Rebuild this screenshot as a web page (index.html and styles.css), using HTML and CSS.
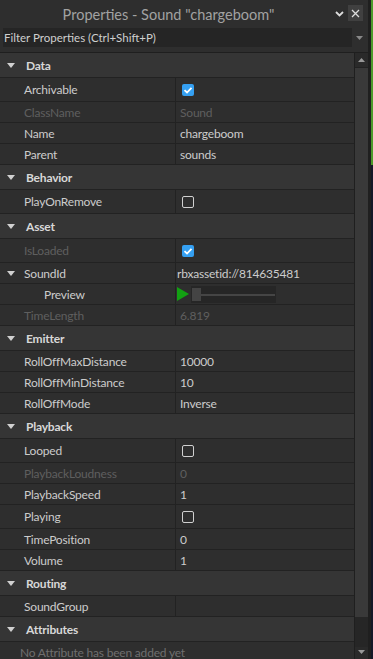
FILE: index.html
```html
<!DOCTYPE html>
<html lang="en">
<head>
    <meta charset="UTF-8">
    <title>Properties - Sound "chargeboom"</title>
    <link rel="stylesheet" href="styles.css">
</head>
<body>
    <div class="window">
        <div class="titlebar">
            <span class="title">Properties - Sound "chargeboom"</span>
            <span class="chev">
                <svg width="9" height="6" viewBox="0 0 9 6"><path d="M1 1 L4.5 4.5 L8 1" fill="none" stroke="#ddd" stroke-width="1.8"/></svg>
            </span>
            <span class="close">
                <svg width="9" height="9" viewBox="0 0 9 9"><path d="M1 1 L8 8 M8 1 L1 8" stroke="#ddd" stroke-width="1.3"/></svg>
            </span>
        </div>
        <div class="filter">
            <div class="filter-input">Filter Properties (Ctrl+Shift+P)</div>
            <span class="filter-arrow">
                <svg width="7" height="4" viewBox="0 0 7 4"><path d="M0 0 H7 L3.5 4 Z" fill="#888"/></svg>
            </span>
        </div>
        <div class="pane">
            <div class="list">
                <div class="section"><span class="tri"></span>Data</div>
                <div class="row tall"><span class="name">Archivable</span><span class="value"><span class="check on"></span></span></div>
                <div class="row disabled"><span class="name">ClassName</span><span class="value">Sound</span></div>
                <div class="row"><span class="name">Name</span><span class="value">chargeboom</span></div>
                <div class="row"><span class="name">Parent</span><span class="value">sounds</span></div>

                <div class="section"><span class="tri"></span>Behavior</div>
                <div class="row tall"><span class="name">PlayOnRemove</span><span class="value"><span class="check"></span></span></div>

                <div class="section"><span class="tri"></span>Asset</div>
                <div class="row tall disabled"><span class="name">IsLoaded</span><span class="value"><span class="check on"></span></span></div>
                <div class="row"><span class="name"><span class="tri small"></span>SoundId</span><span class="value flush">rbxassetid://814635481</span></div>
                <div class="row"><span class="name sub">Preview</span><span class="value flush">
                    <span class="play"></span>
                    <span class="slider"><span class="knob"></span></span>
                </span></div>
                <div class="row disabled"><span class="name">TimeLength</span><span class="value">6.819</span></div>

                <div class="section"><span class="tri"></span>Emitter</div>
                <div class="row"><span class="name">RollOffMaxDistance</span><span class="value">10000</span></div>
                <div class="row"><span class="name">RollOffMinDistance</span><span class="value">10</span></div>
                <div class="row"><span class="name">RollOffMode</span><span class="value">Inverse</span></div>

                <div class="section"><span class="tri"></span>Playback</div>
                <div class="row tall"><span class="name">Looped</span><span class="value"><span class="check"></span></span></div>
                <div class="row disabled"><span class="name">PlaybackLoudness</span><span class="value">0</span></div>
                <div class="row"><span class="name">PlaybackSpeed</span><span class="value">1</span></div>
                <div class="row tall"><span class="name">Playing</span><span class="value"><span class="check"></span></span></div>
                <div class="row"><span class="name">TimePosition</span><span class="value">0</span></div>
                <div class="row"><span class="name">Volume</span><span class="value">1</span></div>

                <div class="section"><span class="tri"></span>Routing</div>
                <div class="row"><span class="name">SoundGroup</span><span class="value"></span></div>

                <div class="section"><span class="tri"></span>Attributes</div>
                <div class="empty">No Attribute has been added yet</div>
            </div>
            <div class="scrollbar">
                <div class="scroll-btn">
                    <svg width="7" height="4" viewBox="0 0 7 4"><path d="M0 4 H7 L3.5 0 Z" fill="#999"/></svg>
                </div>
                <div class="thumb"></div>
                <div class="track"></div>
                <div class="scroll-btn bottom">
                    <svg width="7" height="4" viewBox="0 0 7 4"><path d="M0 0 H7 L3.5 4 Z" fill="#999"/></svg>
                </div>
            </div>
        </div>
    </div>
    <div class="edge"></div>
</body>
</html>
```

FILE: styles.css
```css
body {
    margin: 0;
    width: 373px;
    height: 659px;
    overflow: hidden;
    display: flex;
    background-color: #2e2e2e;
    font-family: 'Lato', 'Noto Sans', sans-serif;
    font-size: 12px;
    letter-spacing: -0.2px;
    color: #cccccc;
}
.window {
    flex: 1;
    display: flex;
    flex-direction: column;
    border-right: 3px solid #1f1f1f;
    min-width: 0;
}
.edge {
    width: 2px;
    background: linear-gradient(#4c9a2a 0, #4c9a2a 165px, #141828 165px);
}
.titlebar {
    height: 28px;
    display: flex;
    align-items: center;
    background-color: #2e2e2e;
}
.title {
    flex: 1;
    text-align: center;
    font-size: 14.5px;
    letter-spacing: 0;
    color: #a2a2a2;
    padding-left: 2px;
}
.chev {
    width: 9px;
    margin-right: 4px;
    display: flex;
}
.close {
    width: 15px;
    height: 16px;
    margin-right: 5px;
    margin-bottom: 2px;
    background-color: #404040;
    display: flex;
    align-items: center;
    justify-content: center;
}
.filter {
    height: 19px;
    display: flex;
    align-items: center;
    padding-left: 3px;
}
.filter-input {
    width: 349px;
    height: 19px;
    line-height: 19px;
    background-color: #252525;
    font-size: 11.5px;
    letter-spacing: 0;
    color: #cfcfcf;
    padding-left: 1px;
    box-sizing: border-box;
}
.filter-arrow {
    margin-left: 4px;
    display: flex;
}
.pane {
    margin-top: 5px;
    flex: 1;
    display: flex;
    border-top: 1px solid #1f1f1f;
    min-height: 0;
}
.list {
    width: 355px;
    border-right: 1px solid #1f1f1f;
    overflow: hidden;
}
.section {
    height: 24px;
    display: flex;
    align-items: center;
    background-color: #353535;
    border-bottom: 1px solid #222222;
    font-weight: bold;
    color: #d8d8d8;
}
.tri {
    width: 0;
    height: 0;
    border-left: 4px solid transparent;
    border-right: 4px solid transparent;
    border-top: 5px solid #d0d0d0;
    margin: 0 11px 0 7px;
}
.tri.small {
    position: absolute;
    left: 7px;
    top: 8px;
    margin: 0;
}
.row {
    height: 20px;
    display: grid;
    grid-template-columns: 176px 1fr;
    border-bottom: 1px solid #222222;
    background-color: #2e2e2e;
}
.row.tall {
    height: 23px;
}
.name {
    position: relative;
    display: flex;
    align-items: center;
    padding-left: 24px;
    border-right: 1px solid #222222;
}
.name.sub {
    padding-left: 44px;
}
.value {
    display: flex;
    align-items: center;
    padding-left: 4px;
}
.value.flush {
    padding-left: 1px;
}
.row.disabled {
    color: #5f5f5f;
}
.check {
    width: 10px;
    height: 10px;
    margin-left: 2px;
    border: 1px solid #d0d0d0;
    border-radius: 2px;
}
.check.on {
    width: 12px;
    height: 12px;
    border: none;
    background-color: #35a0f2;
    background-image: url("data:image/svg+xml,%3Csvg xmlns='http://www.w3.org/2000/svg' width='12' height='12' viewBox='0 0 12 12'%3E%3Cpath d='M2.5 6.2 L5 8.5 L9.5 3.8' fill='none' stroke='white' stroke-width='1.8'/%3E%3C/svg%3E");
}
.play {
    width: 0;
    height: 0;
    border-top: 7px solid transparent;
    border-bottom: 7px solid transparent;
    border-left: 12px solid #12a012;
}
.slider {
    position: relative;
    width: 85px;
    height: 17px;
    margin-left: 2px;
    background-color: #262626;
}
.slider::before {
    content: "";
    position: absolute;
    left: 1px;
    right: 1px;
    top: 8px;
    height: 2px;
    background-color: #454545;
}
.knob {
    position: absolute;
    left: 1px;
    top: 2px;
    width: 9px;
    height: 13px;
    background-color: #444444;
}
.empty {
    padding: 3px 0 0 20px;
    color: #6e6e6e;
}
.scrollbar {
    width: 13px;
    display: flex;
    flex-direction: column;
    background-color: #2a2a2a;
}
.scroll-btn {
    height: 14px;
    display: flex;
    align-items: center;
    justify-content: center;
    border-bottom: 1px solid #222222;
}
.scroll-btn.bottom {
    border-bottom: none;
    height: 9px;
    align-items: flex-start;
    padding-top: 3px;
}
.thumb {
    height: 549px;
    background-color: #393939;
}
.track {
    flex: 1;
    background-color: #262626;
}
```
